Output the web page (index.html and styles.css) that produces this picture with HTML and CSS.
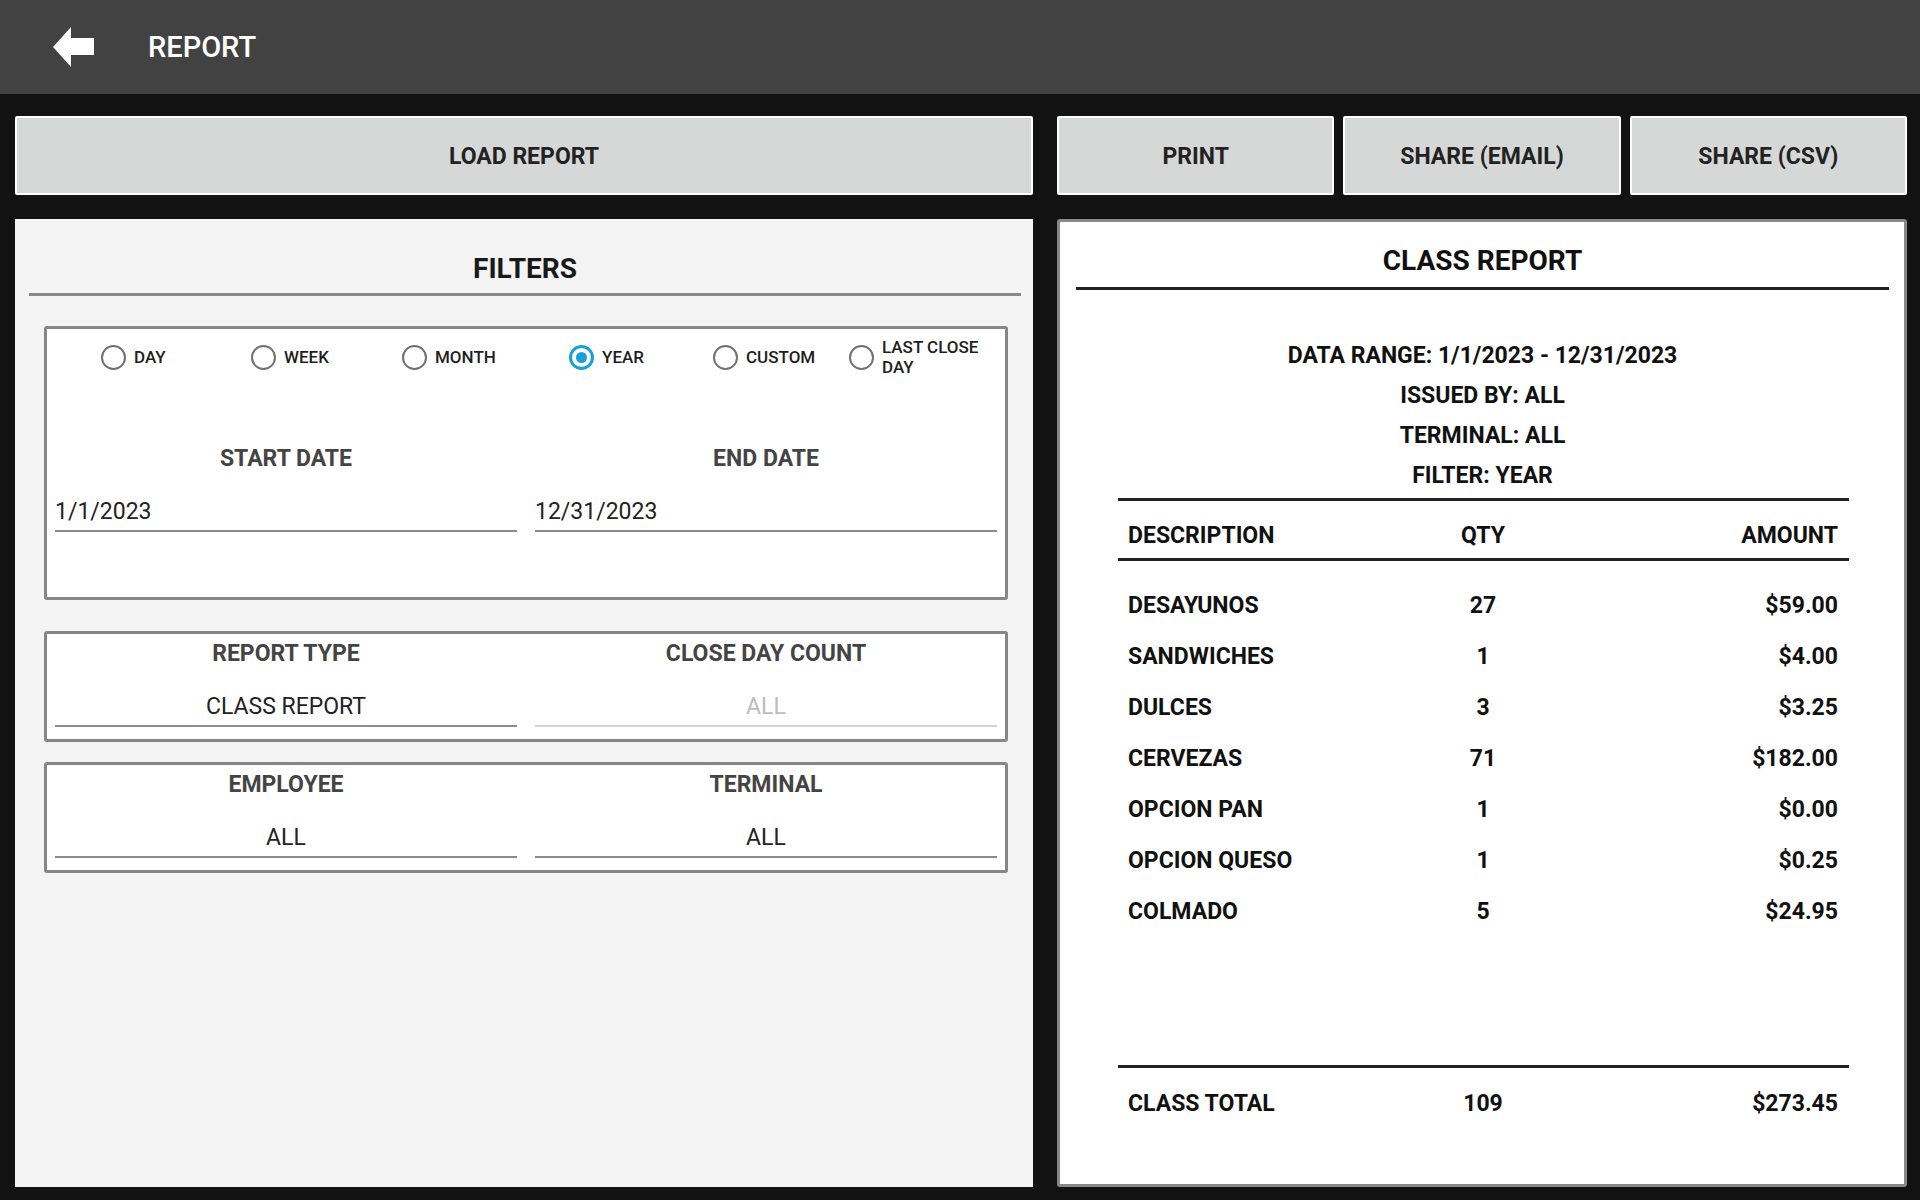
FILE: index.html
```html
<!DOCTYPE html>
<html lang="en">
<head>
<meta charset="utf-8">
<title>Report</title>
<link rel="stylesheet" href="styles.css">
</head>
<body>
<header class="topbar">
  <svg class="back" width="41" height="40" viewBox="0 0 41 40" aria-hidden="true"><polygon points="0,20 18,0 18,11 41,11 41,28 18,28 18,40" fill="#fff"/></svg>
  <h1 class="title">REPORT</h1>
</header>
<main class="main">
  <div class="actions">
    <button class="btn">LOAD REPORT</button>
    <div class="actions-right">
      <button class="btn">PRINT</button>
      <button class="btn">SHARE (EMAIL)</button>
      <button class="btn">SHARE (CSV)</button>
    </div>
  </div>
  <div class="panels">
    <section class="filters">
      <h2 class="filters-title">FILTERS</h2>
      <div class="box date-box">
        <div class="radios">
          <label class="radio"><span class="circle"></span><span class="rlabel">DAY</span></label>
          <label class="radio"><span class="circle"></span><span class="rlabel">WEEK</span></label>
          <label class="radio"><span class="circle"></span><span class="rlabel">MONTH</span></label>
          <label class="radio"><span class="circle checked"></span><span class="rlabel">YEAR</span></label>
          <label class="radio"><span class="circle"></span><span class="rlabel">CUSTOM</span></label>
          <label class="radio"><span class="circle"></span><span class="rlabel two">LAST CLOSE<br>DAY</span></label>
        </div>
        <div class="fields">
          <div class="field">
            <div class="flabel">START DATE</div>
            <div class="fvalue left">1/1/2023</div>
          </div>
          <div class="field">
            <div class="flabel">END DATE</div>
            <div class="fvalue left">12/31/2023</div>
          </div>
        </div>
      </div>
      <div class="box small-box first">
        <div class="fields">
          <div class="field">
            <div class="flabel">REPORT TYPE</div>
            <div class="fvalue">CLASS REPORT</div>
          </div>
          <div class="field">
            <div class="flabel">CLOSE DAY COUNT</div>
            <div class="fvalue disabled">ALL</div>
          </div>
        </div>
      </div>
      <div class="box small-box">
        <div class="fields">
          <div class="field">
            <div class="flabel">EMPLOYEE</div>
            <div class="fvalue">ALL</div>
          </div>
          <div class="field">
            <div class="flabel">TERMINAL</div>
            <div class="fvalue">ALL</div>
          </div>
        </div>
      </div>
    </section>
    <section class="report">
      <h2 class="report-title">CLASS REPORT</h2>
      <div class="info">
        <div>DATA RANGE: 1/1/2023 - 12/31/2023</div>
        <div>ISSUED BY: ALL</div>
        <div>TERMINAL: ALL</div>
        <div>FILTER: YEAR</div>
      </div>
      <div class="table">
        <div class="row head"><span>DESCRIPTION</span><span class="c">QTY</span><span class="r">AMOUNT</span></div>
        <div class="rows">
          <div class="row"><span>DESAYUNOS</span><span class="c">27</span><span class="r">$59.00</span></div>
          <div class="row"><span>SANDWICHES</span><span class="c">1</span><span class="r">$4.00</span></div>
          <div class="row"><span>DULCES</span><span class="c">3</span><span class="r">$3.25</span></div>
          <div class="row"><span>CERVEZAS</span><span class="c">71</span><span class="r">$182.00</span></div>
          <div class="row"><span>OPCION PAN</span><span class="c">1</span><span class="r">$0.00</span></div>
          <div class="row"><span>OPCION QUESO</span><span class="c">1</span><span class="r">$0.25</span></div>
          <div class="row"><span>COLMADO</span><span class="c">5</span><span class="r">$24.95</span></div>
        </div>
        <div class="row total"><span>CLASS TOTAL</span><span class="c">109</span><span class="r">$273.45</span></div>
      </div>
    </section>
  </div>
</main>
</body>
</html>
```
FILE: styles.css
```css
* { box-sizing: border-box; }
html, body { margin: 0; padding: 0; }
body {
  width: 1920px;
  height: 1200px;
  background: #121212;
  font-family: Roboto, "Noto Sans", "Liberation Sans", sans-serif;
  overflow: hidden;
  display: flex;
  flex-direction: column;
}
.topbar {
  height: 94px;
  background: #424242;
  display: flex;
  align-items: center;
  padding-left: 53px;
  flex: none;
}
.back { display: block; }
.title {
  margin: 0 0 0 54px;
  color: #fff;
  font-size: 29px;
  font-weight: 500;
  line-height: 34px;
}
.main {
  flex: 1;
  display: flex;
  flex-direction: column;
  padding: 22px 13px 13px 15px;
  gap: 24px;
  min-height: 0;
}
.actions {
  display: grid;
  grid-template-columns: 1018px 1fr;
  gap: 24px;
  height: 79px;
  flex: none;
}
.actions-right {
  display: grid;
  grid-template-columns: 1fr 1fr 1fr;
  gap: 9px;
}
.btn {
  background: #d6d8d7;
  border: 2px solid #fff;
  border-radius: 2px;
  font-family: inherit;
  font-size: 23px;
  font-weight: 700;
  color: #222;
  height: 79px;
  padding: 2px 0 0;
}
.panels {
  flex: 1;
  display: grid;
  grid-template-columns: 1018px 1fr;
  gap: 24px;
  min-height: 0;
}
.filters {
  background: #f4f4f4;
  padding: 33px 12px 0 14px;
}
.filters-title {
  margin: 0;
  text-align: center;
  font-size: 28px;
  line-height: 34px;
  font-weight: 700;
  color: #1a1a1a;
  padding-bottom: 7px;
  border-bottom: 3px solid #888;
}
.box {
  background: #fff;
  border: 3px solid #868686;
  border-radius: 3px;
  margin: 0 13px 0 15px;
}
.date-box {
  margin-top: 30px;
  height: 274px;
  padding: 8px 8px 0 8px;
}
.radios {
  display: grid;
  grid-template-columns: 150px 151px 167px 144px 136px 1fr;
  height: 40px;
  padding-left: 46px;
  align-items: center;
}
.radio {
  display: flex;
  align-items: center;
  gap: 8px;
}
.circle {
  width: 25px;
  height: 25px;
  border-radius: 50%;
  border: 2px solid #707070;
  flex: none;
  display: flex;
  align-items: center;
  justify-content: center;
}
.circle.checked {
  border: 3px solid #17a1d6;
}
.circle.checked::after {
  content: "";
  width: 11px;
  height: 11px;
  border-radius: 50%;
  background: #17a1d6;
}
.rlabel {
  font-size: 17px;
  font-weight: 500;
  color: #1e1e1e;
  line-height: 20px;
}
.fields {
  display: grid;
  grid-template-columns: 1fr 1fr;
  gap: 18px;
}
.date-box .fields { margin-top: 69px; }
.flabel {
  text-align: center;
  font-size: 23px;
  line-height: 26px;
  font-weight: 700;
  color: #444;
}
.fvalue {
  margin-top: 25px;
  font-size: 23px;
  line-height: 30px;
  padding-bottom: 3px;
  border-bottom: 2px solid #8c8c8c;
  color: #222;
  text-align: center;
}
.fvalue.left { text-align: left; }
.fvalue.disabled { color: #bdbdbd; border-bottom-color: #d2d2d2; }
.small-box {
  height: 111px;
  margin-top: 20px;
  padding: 7px 8px 0 8px;
}
.small-box.first { margin-top: 31px; }
.report {
  background: #fff;
  border: 3px solid #888;
  border-radius: 3px;
  padding: 22px 15px 55px 16px;
  display: flex;
  flex-direction: column;
  min-height: 0;
}
.report-title {
  margin: 0;
  text-align: center;
  font-size: 28px;
  line-height: 34px;
  font-weight: 700;
  color: #111;
  padding-bottom: 9px;
  border-bottom: 3px solid #222;
}
.info {
  margin-top: 46px;
  text-align: center;
  font-size: 23px;
  line-height: 40px;
  font-weight: 700;
  color: #111;
}
.table {
  flex: 1;
  display: flex;
  flex-direction: column;
  margin: 2px 40px 0 42px;
  border-top: 3px solid #222;
}
.row {
  display: grid;
  grid-template-columns: 1fr 1fr 1fr;
  padding: 0 11px 0 10px;
  font-size: 23px;
  font-weight: 700;
  line-height: 51px;
  color: #111;
}
.row .c { text-align: center; }
.row .r { text-align: right; }
.row.head {
  line-height: 40px;
  padding-top: 15px;
  padding-bottom: 2px;
  border-bottom: 3px solid #222;
}
.rows {
  flex: 1;
  padding-top: 19px;
}
.row.total {
  border-top: 3px solid #222;
  padding-top: 10px;
}
```
